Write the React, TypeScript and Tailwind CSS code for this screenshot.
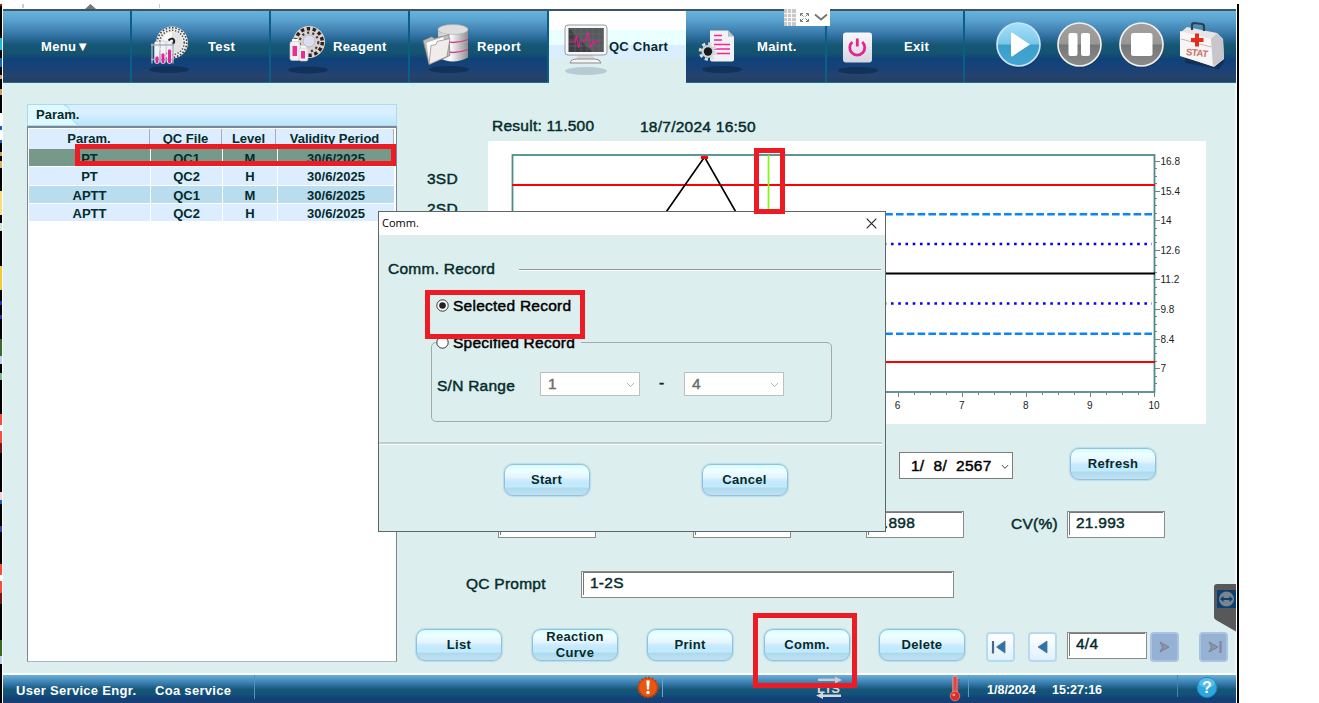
import React from "react";

const HEADER_BG =
  "bg-[linear-gradient(180deg,#68b4dc_0%,#5aa3cf_12%,#3f82b2_28%,#2a6a99_38%,#165676_48%,#14526f_60%,#10427a_68%,#174277_80%,#25436f_90%,#233f60_100%)]";
const FAUX = "text-[15.5px] leading-[22px] tracking-[0.25px] [-webkit-text-stroke:0.45px] whitespace-pre";

function Shadow({ cx = 34 }: { cx?: number }) {
  return <ellipse cx={cx} cy="60" rx="20" ry="3.4" fill="#0f2c50" opacity="0.75" />;
}

function TestIcon() {
  return (
    <svg width="60" height="72" viewBox="0 1.500 60 72">
      <Shadow cx={29} />
      <circle cx="32" cy="33" r="16" fill="#ececec" />
      <circle cx="32" cy="33" r="14.8" fill="none" stroke="#3d3d3d" strokeWidth="1.6" strokeDasharray="1.6 1.7" />
      <circle cx="32" cy="33" r="12.2" fill="none" stroke="#555" strokeWidth="1.5" strokeDasharray="1.4 1.6" />
      <circle cx="32" cy="33" r="10.5" fill="#e3e3e3" />
      <path d="M32 33 L22 30 A10.500 10.500 0 0 1 32 22.500 Z" fill="#fafafa" />
      <path d="M28.500 31Q32 27.500 34 30.500Q35 33 32 35" fill="none" stroke="#222" strokeWidth="2" />
      <g fill="#f4f4f8" stroke="#d2d4da" strokeWidth=".6">
        <rect x="14.500" y="32" width="5" height="22" rx="2" />
        <rect x="20.500" y="32" width="5" height="22" rx="2" />
        <rect x="27" y="32" width="5" height="22" rx="2" />
      </g>
      <path d="M11 35.500H34 M11 50H34 M12 34V54 M33 34V54" stroke="#a9b3c0" strokeWidth="1.300" />
      <g fill="#e8209a">
        <rect x="15.500" y="47" width="3" height="6.500" rx="1" />
        <rect x="21.500" y="44" width="3" height="9.500" rx="1" />
        <rect x="28" y="40" width="3" height="13.500" rx="1" />
      </g>
    </svg>
  );
}

function ReagentIcon() {
  return (
    <svg width="60" height="72" viewBox="-1 1 60 72">
      <Shadow cx={29} />
      <circle cx="30" cy="32" r="16" fill="#d9d5d2" />
      <circle cx="30" cy="32" r="13.300" fill="none" stroke="#2b211f" strokeWidth="3.400" strokeDasharray="3.400 2.600" />
      <circle cx="30" cy="32" r="9.300" fill="none" stroke="#4a3c3a" strokeWidth="2.200" strokeDasharray="2.200 3" />
      <circle cx="30" cy="31" r="6" fill="#dcdcf2" stroke="#bbb" />
      <rect x="13" y="29" width="6" height="4" fill="#fff" />
      <rect x="11" y="31.500" width="10" height="19" rx="2" fill="#f3f0f2" stroke="#c9c3c8" strokeWidth=".6" />
      <rect x="13.500" y="36" width="4.500" height="10" fill="#ec2c93" />
      <rect x="22" y="36" width="5" height="3" fill="#fff" />
      <rect x="20" y="38" width="9" height="13" rx="2" fill="#f3f0f2" stroke="#c9c3c8" strokeWidth=".6" />
      <rect x="22" y="41" width="4" height="7.500" fill="#ec2c93" />
    </svg>
  );
}

function ReportIcon() {
  return (
    <svg width="60" height="72" viewBox="0 1.500 60 72">
      <defs>
        <linearGradient id="cyl" x1="0" x2="1" y1="0" y2="0">
          <stop offset="0" stopColor="#c9c9c9" />
          <stop offset=".4" stopColor="#fff" />
          <stop offset="1" stopColor="#8f8f8f" />
        </linearGradient>
      </defs>
      <Shadow cx={31} />
      <path d="M20 20V48Q35 56 50 48V20Z" fill="url(#cyl)" />
      <ellipse cx="35" cy="20" rx="15" ry="5" fill="#dedede" stroke="#aaa" strokeWidth=".6" />
      <path d="M20 30Q35 36 50 30 M20 40Q35 46 50 40" stroke="#d83a8c" strokeWidth="1.300" fill="none" />
      <path d="M5 31 L14 27 L16 29 L31 25 L32 46 L11 55 Z" fill="#bdbdbd" stroke="#777" strokeWidth=".7" />
      <path d="M8 33 L26 27 L27 44 L11 54 Z" fill="#fff" stroke="#999" strokeWidth=".5" />
      <path d="M11 55 L13 36 L18 35 L19 32 L32 29 L29 47 Z" fill="#efecea" stroke="#8a8580" strokeWidth=".7" />
    </svg>
  );
}

function MonitorIcon() {
  return (
    <svg width="60" height="72" viewBox="-1 1 60 72">
      <ellipse cx="29" cy="61" rx="21" ry="4" fill="#a9bfca" opacity=".75" />
      <path d="M21 45H36L38 50H19Z" fill="#d5d8db" />
      <path d="M13 53Q14 49 20 49H38Q43 49 44 53Z" fill="#f4f4f4" stroke="#8d8d8d" strokeWidth="1" />
      <rect x="8" y="15" width="42" height="30" rx="3" fill="#f7f7f7" stroke="#999" />
      <rect x="11.500" y="18" width="35" height="24" fill="#3c4145" />
      <path d="M11.500 18H46.500V42H35Z" fill="#565a5c" />
      <path d="M12 24H46M12 30H46M12 36H46M18 18V42M24 18V42M30 18V42M36 18V42M42 18V42" stroke="#686d70" strokeWidth=".6" />
      <path d="M12 32H18L19.500 25L21.500 38L23 31H28L31 22L33.500 38L36 31L37.500 34L39 31H43" stroke="#e0218a" strokeWidth="1.100" fill="none" />
    </svg>
  );
}

function MaintIcon() {
  return (
    <svg width="60" height="72" viewBox="1 1.500 60 72">
      <Shadow cx={34} />
      <path d="M22 21H40L46 27V50Q46 52 44 52H24Q22 52 22 50Z" fill="#f0f1f4" />
      <path d="M40 21L46 27H40Z" fill="#b8bcc5" />
      <path d="M26 26H34M26 30.500H34M26 35H42M26 39.500H42M26 44H42" stroke="#ea2b94" strokeWidth="1.600" />
      <circle cx="20" cy="42" r="7.800" fill="none" stroke="#d9dde0" strokeWidth="3" strokeDasharray="3.200 2.920" />
      <circle cx="20" cy="42" r="6.500" fill="#cfd3d6" />
      <circle cx="20" cy="42" r="4.200" fill="#161a1e" />
    </svg>
  );
}

function PowerIcon() {
  return (
    <svg width="60" height="72" viewBox="1 .500 60 72">
      <Shadow cx={32} />
      <defs>
        <linearGradient id="pw" x1="0" x2="0" y1="0" y2="1">
          <stop offset="0" stopColor="#f9f9fb" />
          <stop offset="1" stopColor="#d3d5e0" />
        </linearGradient>
      </defs>
      <rect x="17" y="22" width="29" height="30" rx="3" fill="url(#pw)" />
      <path d="M26.300 31.500A7.500 7.500 0 1 0 36.200 31.500" fill="none" stroke="#e3268f" strokeWidth="2.800" />
      <path d="M31.300 28V36" stroke="#e3268f" strokeWidth="2.800" />
    </svg>
  );
}

function RoundButton({ kind }: { kind: "play" | "pause" | "stop" }) {
  const id = "rb-" + kind;
  const play = kind === "play";
  return (
    <svg width="46" height="48" viewBox="0 0 46 48">
      <defs>
        <linearGradient id={id} x1="0" x2="0" y1="0" y2="1">
          <stop offset="0" stopColor={play ? "#a5e2fb" : "#a3a1a0"} />
          <stop offset=".48" stopColor={play ? "#7cc6e8" : "#999796"} />
          <stop offset=".52" stopColor={play ? "#3a9fcb" : "#777"} />
          <stop offset="1" stopColor={play ? "#46a5d3" : "#8b8b8b"} />
        </linearGradient>
      </defs>
      <circle cx="24" cy="25" r="22" fill="#152f4d" opacity=".5" />
      <circle cx="23.500" cy="23.500" r="21.500" fill={"url(#" + id + ")"} stroke={play ? "#c8e4fa" : "#f3efec"} strokeWidth="1.700" />
      {play && <path d="M16 12.500Q16 11 17.500 11.800L35 23.500L17.500 35.200Q16 36 16 34.500Z" fill="#fff" />}
      {kind === "pause" && (
        <g fill="#fff">
          <rect x="12.500" y="12" width="9" height="23" rx="2" />
          <rect x="25" y="12" width="9" height="23" rx="2" />
        </g>
      )}
      {kind === "stop" && <rect x="13" y="12" width="21.500" height="23" rx="2.500" fill="#fff" />}
    </svg>
  );
}

function StatIcon() {
  return (
    <svg width="52" height="54" viewBox="1 2 52 54">
      <path d="M8 44L42 50L48 42L46 38L8 38Z" fill="#13294a" opacity=".7" />
      <path d="M4 13L10 8L40 14L46 20L47 40L37 48L4 37Z" fill="#e6e4e6" />
      <path d="M3 12L34 20L36 47L3 37Z" fill="#f8f5f5" />
      <path d="M34 20L40 14L46 20L47 40L36 47Z" fill="#c8c6ca" />
      <path d="M4 20L34 28" stroke="#c8b8b8" />
      <path d="M15 11V6Q15 4 17 4L25 5Q27 5.500 27 7V12" fill="none" stroke="#2f3c4c" strokeWidth="2.200" />
      <path d="M18 14.500H22V19H26.500V23H22V27.500H18V23H14V19H18Z" fill="#e22d1f" />
      <text x="9" y="36" fontSize="9.500" fill="#c9716b" fontWeight="700" fontFamily="Liberation Sans" transform="rotate(6 9 34)" textLength="22">STAT</text>
    </svg>
  );
}

function NavItem({ label, width, icon, pad, gap }: { label: string; width: string; icon?: React.ReactNode; pad: string; gap: string }) {
  return (
    <div className={"flex h-full items-start border-r-2 border-[#0b5e86] " + width + " " + pad}>
      {icon}
      <span className={"text-[13px] font-bold leading-[16px] tracking-[0.35px] text-white whitespace-pre mt-[28px] " + gap}>{label}</span>
    </div>
  );
}

function GlassButton({ children, className = "" }: { children: React.ReactNode; className?: string }) {
  return (
    <button
      className={
        "flex h-[32px] w-[86px] shrink-0 items-center justify-center rounded-[9px] border border-[#8fc3dd] bg-[linear-gradient(180deg,#d8fcff_0%,#eeffff_18%,#e2f4ff_42%,#cfe9ff_50%,#bfeafd_62%,#c2ebfc_72%,#b0d9ee_78%,#bfe2f0_100%)] text-center text-[13px] font-bold leading-[16px] tracking-[0.3px] text-[#052b2b] shadow-[0_0_1px_1px_#b9dbea] " +
        className
      }
    >
      {children}
    </button>
  );
}

function Field({ value = "", className }: { value?: string; className: string }) {
  return (
    <div className={"h-[27px] shrink-0 border border-[#8b8b8b] bg-white p-px " + className}>
      <div className={"h-full border-l border-t border-[#777] pl-[6px] -mt-px text-[#052b2b] " + FAUX}><span className="-mt-px block">{value}</span></div>
    </div>
  );
}

function PageButton({ dir, bar, dim, className = "" }: { dir: "l" | "r"; bar?: boolean; dim?: boolean; className?: string }) {
  const fill = dim ? "#8b93a8" : "#2d73ac";
  return (
    <div className={"h-[30px] w-[29px] shrink-0 rounded-[4px] border-2 " + (dim ? "border-[#aac3e0] bg-[#95b1d3] " : "border-[#b9d9f0] bg-[linear-gradient(180deg,#fff,#dff1fc)] ") + className}>
      <svg width="25" height="26" viewBox="0 0 25 26">
        {dir === "l" ? (
          <path d={bar ? "M17 7V19L8.500 13Z" : "M17 7V19L8 13Z"} fill={fill} stroke="#546f93" strokeWidth=".8" />
        ) : (
          <path d="M8 8L17 13L8 18L10.500 13Z" fill={fill} stroke="#7f7f8c" strokeWidth="1" />
        )}
        {bar && <path d={dir === "l" ? "M5 7V19.500" : "M19.500 7V19"} stroke={dim ? "#7f87a0" : "#4a6688"} strokeWidth="2.200" />}
      </svg>
    </div>
  );
}

const Y_LABELS = ["16.8", "15.4", "14", "12.6", "11.2", "9.8", "8.4", "7"];

function Chart() {
  const xs = Array.from({ length: 11 }, (_, i) => i);
  return (
    <svg width="718" height="283" viewBox="488 141 718 283" className="shrink-0 bg-white" fontFamily="Liberation Sans" fontSize="10">
      <g stroke="#7e7e7e" strokeWidth="1">
        {Y_LABELS.map((_, i) => (
          <path key={i} d={`M1155 ${Math.round(161 + i * 29.6) + 0.5}H1160`} />
        ))}
        {Array.from({ length: 31 }, (_, i) => (
          <path key={i} d={`M1155 ${Math.round(161 + i * 7.4) + 0.5}H1157`} />
        ))}
        {Array.from({ length: 41 }, (_, i) => (
          <path key={i} d={`M${Math.round(513 + i * 16.03) + 0.5} 393V${i % 4 ? 395 : 397}`} />
        ))}
      </g>
      <rect x="512.500" y="155" width="642" height="237" fill="none" stroke="#4f8b88" strokeWidth="1.800" />
      <path d="M512 185H1155M512 362H1155" stroke="#f00" strokeWidth="2" />
      <path d="M518 214.200H1155M518 333.700H1155" stroke="#0a84ff" strokeWidth="2.500" strokeDasharray="7.600 3.200" />
      <path d="M514.500 244H1152M514.500 303.500H1152" stroke="#0000f5" strokeWidth="2.600" strokeDasharray="2.600 4.640" />
      <path d="M512 273.500H1155" stroke="#000" strokeWidth="1.800" />
      <path d="M641 248L704.500 157L769 270" stroke="#000" strokeWidth="1.700" fill="none" />
      <rect x="701" y="156" width="7" height="3" fill="#f00" />
      <path d="M768.500 155V391" stroke="#7cfc00" strokeWidth="1.600" />
      {Y_LABELS.map((t, i) => (
        <text key={t} x="1160.500" y={165 + i * 29.6} fill="#222">{t}</text>
      ))}
      {xs.map((i) => (
        <text key={i} x={513 + i * 64.1} y="408.500" textAnchor="middle" fill="#222">{i}</text>
      ))}
    </svg>
  );
}

const ROWS = [
  ["PT", "QC1", "M", "30/6/2025", "bg-[#76998a]"],
  ["PT", "QC2", "H", "30/6/2025", "bg-[#dbedff]"],
  ["APTT", "QC1", "M", "30/6/2025", "bg-[#b9dcee]"],
  ["APTT", "QC2", "H", "30/6/2025", "bg-[#dbedff]"],
];

function ParamPanel() {
  return (
    <section className="ml-[24px] mt-[21px] h-[558px] w-[370px] shrink-0 text-[13px] font-bold text-[#052b2b]">
      <div className="flex h-[22px] border border-[#a9dcf3] bg-[linear-gradient(180deg,#dcefff_0%,#d9eeff_45%,#cdeeff_55%,#bfe4f8_100%)]">
        <svg width="50" height="20" viewBox="0 0 50 20" className="-mr-[50px] shrink-0">
          <path d="M0 0H36Q41 1 42 6Q43 16 50 20H0Z" fill="#dffafe" />
          <path d="M36 0Q41 1 42 6Q43 16 50 20" fill="none" stroke="#9ed6f5" />
        </svg>
        <span className="relative pl-[8px] leading-[19px]">Param.</span>
      </div>
      <div className="h-[536px] border border-t-2 border-[#7d8791] border-b-[#a9b4bc] bg-white px-px pt-px text-center">
        <div className="mr-px grid h-[20px] grid-cols-[121px_72px_54px_1fr] bg-[#dbedff] leading-[20px]">
          {["Param.", "QC File", "Level", "Validity Period"].map((h) => (
            <span key={h} className="border-r border-[#a9adb5]">{h}</span>
          ))}
        </div>
        <div className="mr-px flex flex-col gap-px">
          {ROWS.map((r, i) => (
            <div key={i} className="grid h-[17.300px] grid-cols-[121px_71px_54px_1fr] gap-x-px leading-[20px]">
              {r.slice(0, 4).map((c, j) => (
                <span key={j} className={"overflow-hidden " + r[4]}>{c}</span>
              ))}
            </div>
          ))}
        </div>
      </div>
    </section>
  );
}

function Radio({ checked }: { checked?: boolean }) {
  return (
    <svg width="13" height="13" viewBox="0 0 13 13" className="shrink-0">
      <circle cx="6.500" cy="6.500" r="5.700" fill="#fff" stroke="#333" />
      {checked && <circle cx="6.500" cy="6.500" r="3.300" fill="#222" />}
    </svg>
  );
}

function Combo({ value, className = "" }: { value: string; className?: string }) {
  return (
    <div className={"flex h-[24px] w-[100px] shrink-0 items-center justify-between border border-[#bfbfbf] bg-white pl-[7px] pr-[4px] " + className}>
      <span className={"text-[#6d6d6d] -mt-px " + FAUX}>{value}</span>
      <svg width="9" height="6" viewBox="0 0 9 6" className="mt-[2px]"><path d="M1 1L4.500 4.500L8 1" fill="none" stroke="#b5b5b5" /></svg>
    </div>
  );
}

function Dialog() {
  return (
    <div className="absolute left-[378px] top-[211px] flex h-[321px] w-[508px] flex-col border border-[#5e6668] bg-[#dceeed] text-[#052b2b]">
      <div className="flex h-[23px] items-center justify-between bg-white pl-[3px] pr-[8px]">
        <span className="font-['Open_Sans','Noto_Sans',sans-serif] text-[11px] text-black">Comm.</span>
        <svg width="11" height="11" viewBox="0 0 11 11"><path d="M.7 .7L10.300 10.300M10.300 .7L.7 10.300" stroke="#222" strokeWidth="1.100" /></svg>
      </div>
      <div className="mt-[23px] flex h-[20px] items-center pl-[9px] pr-[4px]">
        <span className={"mt-[2px] w-[131px] shrink-0 " + FAUX}>Comm. Record</span>
        <div className="mt-[4px] h-[2px] flex-1 border-t border-[#909898] bg-white" />
      </div>
      <label className="mt-[17px] flex h-[20px] items-center pl-[56.500px] text-black">
        <Radio checked />
        <span className={"ml-[4.500px] mt-px " + FAUX}>Selected Record</span>
      </label>
      <fieldset className="mt-[17px] ml-[52px] h-[90px] w-[401px] rounded-[5px] border border-[#a3aaaa]">
        <legend className="ml-[3.500px] flex h-[20px] items-center pr-[6px] text-black">
          <Radio />
          <span className={"ml-[4.500px] mt-px " + FAUX}>Specified Record</span>
        </legend>
        <div className="mt-[20px] flex h-[24px] items-center pl-[5px]">
          <span className={"mt-[4px] w-[103px] shrink-0 " + FAUX}>S/N Range</span>
          <Combo value="1" />
          <span className={"-mt-[2px] w-[44px] shrink-0 pl-[19px] " + FAUX}>-</span>
          <Combo value="4" />
        </div>
      </fieldset>
      <div className="mt-[20px] mr-[3px] h-[3px] border-t-2 border-[#c4cccc] bg-white" />
      <div className="mt-[19px] flex pl-[124.500px]">
        <GlassButton>Start</GlassButton>
        <GlassButton className="ml-[112px]">Cancel</GlassButton>
      </div>
    </div>
  );
}

function DetailArea() {
  return (
    <section className="flex flex-1 flex-col text-[#052b2b]">
      <div className="flex h-[58px] pl-[95px] pt-[32px]">
        <span className={"w-[148px] shrink-0 " + FAUX}>Result: 11.500</span>
        <span className={"mt-px " + FAUX}>18/7/2024 16:50</span>
      </div>
      <div className="flex h-[283px]">
        <div className="flex w-[91px] shrink-0 flex-col gap-[8px] pl-[30px] pt-[27px]">
          {["3SD", "2SD"].map((s) => (
            <span key={s} className={FAUX}>{s}</span>
          ))}
        </div>
        <Chart />
      </div>
      <div className="flex h-[87px] items-start pl-[478px] pt-[24px]">
        <span className={"mt-[3px] w-[24px] shrink-0 " + FAUX}>--</span>
        <div className="mt-[4px] flex h-[27px] w-[114px] shrink-0 items-center border border-[#7d7d7d] bg-white pl-[11px] text-black">
          <span className={"w-[90px] shrink-0 " + FAUX}>{"1/  8/  2567"}</span>
          <svg width="8" height="6" viewBox="0 0 8 6" className="mt-[3px] shrink-0"><path d="M.8 1L4 4.300L7.200 1" fill="none" stroke="#444" /></svg>
        </div>
        <GlassButton className="ml-[57px]">Refresh</GlassButton>
      </div>
      <div className="flex h-[27px] pl-[101px]">
        <Field className="w-[98px]" />
        <Field className="ml-[97px] w-[98px]" />
        <Field className="ml-[75px] w-[98px]" value="2.898" />
        <span className={"ml-[47px] mt-[2px] w-[56px] shrink-0 " + FAUX}>CV(%)</span>
        <Field className="w-[98px]" value="21.993" />
      </div>
      <div className="mt-[33px] flex h-[27px] pl-[69px]">
        <span className={"mt-[2px] w-[115px] shrink-0 " + FAUX}>QC Prompt</span>
        <Field className="w-[373px]" value="1-2S" />
      </div>
      <div className="mt-[31px] flex items-start pl-[19px]">
        <GlassButton>List</GlassButton>
        <GlassButton className="ml-[30px]"><span>Reaction<br />Curve</span></GlassButton>
        <GlassButton className="ml-[29px]">Print</GlassButton>
        <GlassButton className="ml-[31px]">Comm.</GlassButton>
        <GlassButton className="ml-[29px]">Delete</GlassButton>
        <PageButton dir="l" bar className="ml-[21px] mt-[3px]" />
        <PageButton dir="l" className="ml-[13px] mt-[3px]" />
        <Field className="ml-[10px] mt-[3px] w-[80px]" value="4/4" />
        <PageButton dir="r" dim className="ml-[3px] mt-[3px]" />
        <PageButton dir="r" bar dim className="ml-[20px] mt-[3px]" />
      </div>
    </section>
  );
}

function StatusBar() {
  return (
    <footer className="flex h-[28px] items-start bg-[linear-gradient(180deg,#6ab0d8_0%,#4a90bf_18%,#2a6d9c_38%,#155575_52%,#14527a_68%,#114179_82%,#1a3f72_100%)] pl-[13px] text-[13px] font-bold leading-[31px] text-white whitespace-nowrap">
      <span className="w-[139px] tracking-[0.3px]">User Service Engr.</span>
      <span className="w-[99px] tracking-[0.3px]">Coa service</span>
      <i className="h-[24px] w-px bg-[#4f93bd]" />
      <svg width="24" height="26" viewBox="0 0 24 26" className="ml-[381px] shrink-0">
        <circle cx="12" cy="12.500" r="9.700" fill="#e0500e" stroke="#c53f08" strokeWidth="2" strokeDasharray="2 1.500" />
        <circle cx="12" cy="12.500" r="8.500" fill="#e8570f" />
        <path d="M10.300 5.500H13.700L13 14.500H11Z" fill="#fff" />
        <circle cx="12" cy="17.500" r="1.700" fill="#fff" />
      </svg>
      <i className="ml-[2px] h-[22px] w-px bg-[#6aa4cb]" />
      <svg width="28" height="28" viewBox="0 0 28 28" className="ml-[152px] shrink-0">
        <path d="M3 3.500H20V1.500L27 5L20 8.500V6H3Z" fill="#c9ccd0" />
        <text x="2" y="18" fontSize="13" fontWeight="700" fill="#d5d7da" fontFamily="Liberation Sans" textLength="23">LIS</text>
        <path d="M26 19.500H8V17.500L1 20.500L8 24V22H26Z" fill="#d5d7da" />
      </svg>
      <svg width="14" height="28" viewBox="0 0 14 28" className="ml-[105px] shrink-0">
        <rect x="4.800" y="1" width="4.400" height="20" rx="2.200" fill="#e54640" stroke="#f0b8b5" strokeWidth=".7" />
        <circle cx="7" cy="21" r="4.800" fill="#e32b25" stroke="#f0a8a5" strokeWidth=".6" />
        <circle cx="5.800" cy="19.800" r="1.400" fill="#ff9f98" />
        <path d="M9 5H12M9 8H12M9 11H12M9 14H12" stroke="#a33a48" strokeWidth=".8" />
      </svg>
      <i className="ml-[6px] h-[22px] w-px bg-[#5d9bc4]" />
      <span className="ml-[18px] w-[65px] text-[12.500px]">1/8/2024</span>
      <span className="w-[125px] text-[12.500px]">15:27:16</span>
      <i className="h-[22px] w-px bg-[#4585b0]" />
      <svg width="24" height="26" viewBox="0 0 24 26" className="ml-[17px] shrink-0">
        <circle cx="12" cy="12.500" r="10" fill="#2fa6dc" stroke="#1b82bb" />
        <ellipse cx="12" cy="8" rx="8" ry="5" fill="#71cdf2" opacity=".6" />
        <text x="12" y="18" textAnchor="middle" fontSize="16" fontWeight="700" fill="#fff" fontFamily="Liberation Sans">?</text>
      </svg>
    </footer>
  );
}

const EDGE =
  "bg-[linear-gradient(180deg,#b31515_0_2px,#000_2px_34px,#18b8df_34px_46px,#000_46px_54px,#1b62b5_54px_63px,#000_63px_71px,#c8a080_71px_75px,#000_75px_85px,#c9a060_85px_91px,#000_91px_109px,#fff_109px_122px,#0a62d0_122px_126px,#fff_126px_136px,#1b62d5_136px_139px,#000_139px_148px,#d2a050_148px_152px,#000_152px_157px,#d8b060_157px_164px,#000_164px_187px,#fbdc7c_187px_211px,#000_211px_219px,#d0e8d0_219px_227px,#000_227px_262px,#f4c939_262px_286px,#000_286px_297px,#2530c8_297px_301px,#000_301px_311px,#2530c8_311px_315px,#000_315px_335px,#3a6a30_335px_352px,#bcd0f0_352px_360px,#000_360px_369px,#80b890_369px_376px,#000_376px_410px,#fb4b3a_410px_421px,#fff_421px_427px,#fb4b3a_427px_439px,#7a1515_439px_449px,#000_449px_488px,#f4d0d0_488px_496px,#1b62b5_496px_500px,#000_500px_522px,#3040a0_522px_528px,#000_528px_560px,#fb4b3a_560px_571px,#fff_571px_577px,#fb4b3a_577px_589px,#7a1515_589px_600px,#000_600px_636px,#3a6a20_636px_652px,#bcd0f0_652px_660px,#000_660px_699px)]";

export default function App() {
  return (
    <div className="relative flex h-[703px] w-[1319px] flex-col overflow-hidden bg-white font-['Liberation_Sans',Arial,sans-serif]">
      <div className="flex h-[4px] shrink-0" />
      <div className="flex h-[699px]">
        <div className={"h-full w-[2px] " + EDGE} />
        <div className="ml-px flex w-[1233px] flex-col">
          <svg width="1233" height="5" viewBox="3 4 1233 5" className="shrink-0">
            <path d="M22 4V8H24V4ZM159 4V8H160V4Z" fill="#ccc" />
            <path d="M85 9L90.500 4L96 9Z" fill="#777" />
          </svg>
          <header className={"flex h-[74px] shrink-0 border-t-2 border-b border-t-[#3c5465] border-b-[#1b6f98] " + HEADER_BG}>
            <NavItem label={"Menu▼"} width="w-[129px]" pad="pl-[38px]" gap="" />
            <NavItem label="Test" width="w-[139px]" icon={<TestIcon />} pad="pl-[8px]" gap="ml-[8px]" />
            <NavItem label="Reagent" width="w-[139px]" icon={<ReagentIcon />} pad="pl-[7px]" gap="-ml-[5px]" />
            <NavItem label="Report" width="w-[139px]" icon={<ReportIcon />} pad="pl-[8px]" gap="-ml-px" />
            <div className="-mb-px flex w-[137px] bg-[linear-gradient(180deg,#fff_0_26%,#eaffff_26%_47%,#dbeeff_47%_65%,#dceeed_67%_100%)] pl-[7px]">
              <MonitorIcon />
              <span className="-ml-[7px] mt-[28px] text-[13px] font-bold leading-[16px] tracking-[0.25px] text-[#052b2b] whitespace-pre">QC Chart</span>
            </div>
            <NavItem label="Maint." width="w-[141px]" icon={<MaintIcon />} pad="pl-[3px]" gap="ml-[8px]" />
            <NavItem label="Exit" width="w-[138px]" icon={<PowerIcon />} pad="" gap="ml-[17px]" />
            <div className="flex pl-[30px] pt-[10px]">
              <RoundButton kind="play" />
              <div className="ml-[15px]"><RoundButton kind="pause" /></div>
              <div className="ml-[16px]"><RoundButton kind="stop" /></div>
              <div className="ml-[14px]"><StatIcon /></div>
            </div>
          </header>
          <main className="flex h-[590px] shrink-0 border-r border-[#eaf6f6] bg-[#dceeed]">
            <ParamPanel />
            <DetailArea />
          </main>
          <div className="h-[2px] shrink-0 bg-white" />
          <StatusBar />
        </div>
        <div className="ml-px w-[2px] bg-black" />
      </div>

      <div className="absolute left-[784px] top-[9px] flex h-[17px] w-[46px] items-center bg-white">
        <svg width="46" height="17" viewBox="0 0 46 17">
          <rect width="12" height="17" fill="#c9c9c9" />
          <path d="M0 4.500H12M0 8.500H12M0 12.500H12M3.500 0V17M7.500 0V17" stroke="#f7f7f7" />
          <path d="M16.500 7V4.500H19M22 4.500H24.500V7M24.500 10V12.500H22M19 12.500H16.500V10M17 5L19.500 7.500M24 5L21.500 7.500M24 12L21.500 9.500M17 12L19.500 9.500" fill="none" stroke="#777" />
          <path d="M31 5.500L37 10.500L43 5.500" fill="none" stroke="#777" strokeWidth="2" />
        </svg>
      </div>
      <svg width="22" height="48" viewBox="0 0 22 48" className="absolute left-[1214px] top-[584px]">
        <path d="M3 0H23V48L2 36Q0 35 0 33V3Q0 0 3 0Z" fill="#58585a" />
        <rect x="3" y="6" width="19" height="18" fill="#0d3f70" />
        <circle cx="12.500" cy="15" r="7.500" fill="#78848e" />
        <path d="M6 15L9.500 12V14H15.500V12L19 15L15.500 18V16H9.500V18Z" fill="#0d3f70" />
      </svg>
      <Dialog />
      <div className="absolute left-[75px] top-[144px] h-[22px] w-[321px] border-[5px] border-[#ed1c24]" />
      <div className="absolute left-[754px] top-[148px] h-[66px] w-[31px] border-[5px] border-[#ed1c24]" />
      <div className="absolute left-[425px] top-[290px] h-[49px] w-[160px] border-[5px] border-[#ed1c24]" />
      <div className="absolute left-[753px] top-[613px] h-[75px] w-[104px] border-[5px] border-[#ed1c24]" />
    </div>
  );
}
